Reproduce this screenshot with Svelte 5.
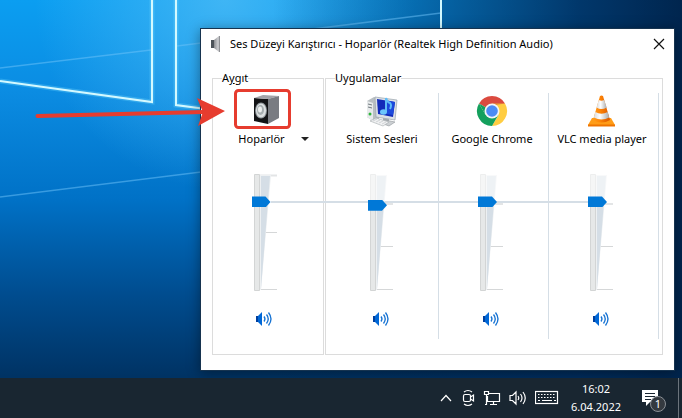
<script>
  let device = { name: "Hoparlör", volume: 76 };

  let apps = [
    { id: "system", name: "Sistem Sesleri", volume: 73 },
    { id: "chrome", name: "Google Chrome", volume: 76 },
    { id: "vlc", name: "VLC media player", volume: 76 },
  ];
</script>

{#snippet volumeIcon()}
  <svg width="19" height="16" viewBox="0 0 19 16" aria-hidden="true">
    <path d="M0 5h2v6H0z" fill="#003f9e" />
    <path d="M2 5l4-4v14l-4-4z" fill="#0067d6" />
    <path d="M8 5.500q2 2.500 0 5M10.500 3.500q3.500 4.500 0 9M12.500 1.500q5 6.500 0 13" fill="none" stroke="#1572d3" stroke-width="1.300" />
  </svg>
{/snippet}

{#snippet scale(isDevice)}
  <svg class="scale" width="28" height="119" viewBox="0 0 28 119" aria-hidden="true">
    {#if isDevice}
      <path d="M8 2.500h17" stroke="#e3e5e6" stroke-width="2" />
      <path d="M8 59.500h17M8 116.500h17" stroke="#d5d7d8" />
    {:else}
      <path d="M8 31h17" stroke="#e3e5e6" stroke-width="2" />
      <path d="M8 73.500h17M8 116.500h17" stroke="#d5d7d8" />
    {/if}
    <path d="M7 2h12l-10 115h-2z" fill="#edf0f2" />
    <path d="M9 3h9l-9 113z" fill="#d5dee6" />
    <path d="M2.500 1.500h5v116h-5z" fill="#e6e8e8" stroke="#d3d5d5" />
    {#if !isDevice}
      <path d="M0 0h20v28H0z" fill="#fff" opacity="0.6" />
    {/if}
  </svg>
{/snippet}

<main class="desktop">
  <svg class="wallpaper" viewBox="0 0 682 418" preserveAspectRatio="xMinYMin slice" aria-hidden="true">
    <defs>
      <linearGradient id="sky" x1="0" y1="0" x2="0" y2="1">
        <stop offset="0" stop-color="#0b9ef1" />
        <stop offset="0.22" stop-color="#0b8ce2" />
        <stop offset="0.48" stop-color="#0071c6" />
        <stop offset="0.7" stop-color="#004d90" />
        <stop offset="0.9" stop-color="#003364" />
      </linearGradient>
      <radialGradient id="glow" gradientUnits="userSpaceOnUse" cx="225" cy="0" r="190">
        <stop offset="0" stop-color="#50bdf6" stop-opacity="0.75" />
        <stop offset="1" stop-color="#50bdf6" stop-opacity="0" />
      </radialGradient>
      <linearGradient id="shade" x1="0" y1="0" x2="1" y2="0">
        <stop offset="0.4" stop-color="#002c5c" stop-opacity="0" />
        <stop offset="0.64" stop-color="#002c5c" stop-opacity="0.5" />
        <stop offset="0.85" stop-color="#002c5c" stop-opacity="0.9" />
        <stop offset="1" stop-color="#00254e" />
      </linearGradient>
    </defs>
    <rect width="682" height="418" fill="url(#sky)" />
    <rect width="682" height="418" fill="url(#glow)" />
    <rect width="682" height="418" fill="url(#shade)" />
    <path d="M0 68l151-18M177 46l264-33M0 197l201-25" stroke="#6fc4fa" stroke-opacity="0.5" stroke-width="1.500" />
    <g fill="none" stroke="#6fd6ff" stroke-opacity="0.3" stroke-width="5">
      <path d="M152 0v102L0 81" />
      <path d="M176 0v105l30 4" />
    </g>
    <g fill="none" stroke="#d3f9ff" stroke-width="2">
      <path d="M152 0v102L0 81" />
      <path d="M176 0v105l30 4" />
      <path d="M441 0v40" />
    </g>
  </svg>

  <section class="window" aria-label="Ses Düzeyi Karıştırıcı">
    <header class="titlebar">
      <svg width="12" height="18" viewBox="0 0 12 18" aria-hidden="true">
        <defs>
          <linearGradient id="cone" x1="0" y1="0" x2="1" y2="0">
            <stop offset="0" stop-color="#8a8c90" />
            <stop offset="0.7" stop-color="#d0d1d4" />
            <stop offset="1" stop-color="#77797d" />
          </linearGradient>
        </defs>
        <path d="M0 5h3v8H0z" fill="#4d5359" />
        <path d="M3 5l5-4h1v16H8l-5-4z" fill="url(#cone)" />
      </svg>
      <h1>Ses Düzeyi Karıştırıcı - Hoparlör (Realtek High Definition Audio)</h1>
      <button class="close" aria-label="Kapat">
        <svg width="12" height="12" viewBox="0 0 12 12"><path d="M1 1l10 10M11 1L1 11" stroke="#111" stroke-width="1.200" /></svg>
      </button>
    </header>

    <div class="mixer">
      <fieldset class="group device">
        <legend>A<u>y</u>gıt</legend>
        <div class="column">
          <button class="picture" aria-label="Hoparlör özellikleri">
            <svg width="30" height="34" viewBox="0 0 30 34">
              <path d="M3 4l14 1v25L3 27z" fill="#131416" />
              <path d="M3 4l9-3 16 1-11 3z" fill="#a2a4a9" />
              <path d="M17 5l11-3v22l-11 6z" fill="#797c82" />
              <ellipse cx="10" cy="16.500" rx="6" ry="8" fill="#8e9599" />
              <ellipse cx="10" cy="16.500" rx="5" ry="7" fill="#dce0e1" />
              <ellipse cx="9.500" cy="16" rx="3.500" ry="5" fill="#a7afb1" />
              <ellipse cx="9" cy="15.500" rx="2" ry="3" fill="#edf0ef" />
            </svg>
          </button>
          <button class="name picker">{device.name}<span class="caret"></span></button>
          <div class="slider">
            {@render scale(true)}
            <input type="range" min="0" max="100" aria-label={device.name} bind:value={device.volume} />
          </div>
          <button class="mute" aria-label="{device.name} sesini kapat">{@render volumeIcon()}</button>
        </div>
      </fieldset>

      <fieldset class="group apps">
        <legend>Uygulamalar</legend>
        {#each apps as app (app.id)}
          <div class="column">
            <button class="picture" aria-label={app.name}>
              {#if app.id === "system"}
                <svg width="32" height="34" viewBox="0 0 32 34">
                  <path d="M1 7l7-4 5 2v20l-6 2-6-4z" fill="#b9bfc2" />
                  <path d="M1 7l6 2v18l-6-4z" fill="#e7eaeb" />
                  <path d="M2 10l4 1M2 13l4 1" stroke="#727a80" />
                  <circle cx="4" cy="20" r="1.500" fill="#2fb53c" />
                  <path d="M9 3l22 3-2 20-19-3z" fill="#dce1e6" stroke="#9aa3ac" stroke-width="0.700" />
                  <path d="M11 5l18 3-2 15-15-3z" fill="#122bb9" />
                  <path d="M19 6l10 2-2 13-6-1z" fill="#1c49dc" />
                  <path d="M17 24l6 1v3h-6z" fill="#a7adb2" />
                  <path d="M12 28l7-2 10 2-6 4z" fill="#ccd0d3" stroke="#90969b" stroke-width="0.600" />
                  <path d="M4 27l6-3 13 4-6 4z" fill="#f1f2f3" stroke="#a3a9ad" stroke-width="0.600" />
                  <path d="M7 27l4-2M10 28l4-2M13 29l4-2M16 30l4-2" stroke="#b9bec1" stroke-width="0.600" />
                  <path d="M20 18V4q1 4 4 5 2 2 0 6" fill="none" stroke="#5fbcf8" stroke-width="2" />
                  <ellipse cx="17.500" cy="18" rx="3.500" ry="2.800" fill="#6cc6fb" />
                </svg>
              {:else if app.id === "chrome"}
                <svg width="32" height="34" viewBox="0 0 32 34">
                  <path d="M16 17L3 9.500A15 15 0 0 1 29 9.500z" fill="#db4a3f" />
                  <path d="M16 9.500H29A15 15 0 0 1 16 32l6.500-11z" fill="#ffcd42" />
                  <path d="M3 9.500A15 15 0 0 0 16 32l6.500-11.250L9.500 20.750z" fill="#14a05d" />
                  <path d="M3 9.500l6.500 11.250L16 17z" fill="#14a05d" />
                  <path d="M16 9.500h13l-10 1.500z" fill="#c43b31" opacity="0.5" />
                  <circle cx="16" cy="17" r="7.500" fill="#f4f5f5" />
                  <circle cx="16" cy="17" r="5.800" fill="#4b8bf5" />
                </svg>
              {:else}
                <svg width="32" height="34" viewBox="0 0 32 34">
                  <defs>
                    <linearGradient id="orange" x1="0" y1="0" x2="1" y2="0">
                      <stop offset="0" stop-color="#ff9d1c" />
                      <stop offset="0.4" stop-color="#ff8607" />
                      <stop offset="1" stop-color="#d95600" />
                    </linearGradient>
                    <linearGradient id="white" x1="0" y1="0" x2="1" y2="0">
                      <stop offset="0" stop-color="#d9dadb" />
                      <stop offset="0.4" stop-color="#fff" />
                      <stop offset="1" stop-color="#a9abad" />
                    </linearGradient>
                  </defs>
                  <path d="M6 24h19l4 7H2z" fill="#ff9c17" />
                  <path d="M2 30.500h27v2H2z" fill="#ef7400" />
                  <path d="M14 2q1.500-1 3 0l7 24q-8.500 5-17 0z" fill="url(#orange)" />
                  <path d="M12.800 6q2.700 1.500 5.400 0l2.500 7.500q-5.200 3-10.200 0z" fill="url(#white)" />
                  <path d="M9.300 18q6.200 3.500 12.400 0l1.500 5.500q-7.700 4-15.400 0z" fill="url(#white)" />
                </svg>
              {/if}
            </button>
            <div class="name">{app.name}</div>
            <div class="slider">
              {@render scale(false)}
              <input type="range" min="0" max="100" aria-label={app.name} bind:value={app.volume} />
            </div>
            <button class="mute" aria-label="{app.name} sesini kapat">{@render volumeIcon()}</button>
          </div>
        {/each}
      </fieldset>
      <div class="level"></div>
    </div>
  </section>

  <svg class="callout" width="300" height="140" viewBox="0 0 300 140" aria-hidden="true">
    <path d="M37.500 116L204 112" stroke="#e63c2f" stroke-width="4" stroke-linecap="round" />
    <path d="M197 98l28 13-27 15 5-14z" fill="#e63c2f" />
    <rect x="235.500" y="90.500" width="54" height="37" rx="3" fill="none" stroke="#e63c2f" stroke-width="3" />
  </svg>

  <footer class="taskbar">
    <button aria-label="Gizli simgeleri göster">
      <svg width="14" height="16" viewBox="0 0 14 16"><path d="M2 11l5-5.500L12 11" /></svg>
    </button>
    <button aria-label="Şimdi Toplan">
      <svg width="14" height="18" viewBox="0 0 14 18">
        <rect x="2.500" y="5.500" width="7" height="7" rx="1.500" />
        <path d="M9.500 8l3-2v6l-3-2M3 3q4-3 8 0M3 15q4 3 8 0" />
      </svg>
    </button>
    <button aria-label="Ağ">
      <svg width="18" height="16" viewBox="0 0 18 16">
        <path d="M6 3.500h10.500v8H4.500V6M10.500 11.500v3M7 14.500h7M1.500 1.500h4v3h-4zM3.500 5v9.500H2" />
      </svg>
    </button>
    <button aria-label="Ses">
      <svg width="18" height="16" viewBox="0 0 18 16">
        <path d="M1 5.500h2.500l3.500-3.500v12l-3.500-3.500H1zM9 6q1.500 2 0 4M11.500 4q3 4 0 8M14 2q4.500 6 0 12" />
      </svg>
    </button>
    <button aria-label="Dokunmatik klavye">
      <svg width="24" height="16" viewBox="0 0 24 16">
        <rect x="0.500" y="1.500" width="22" height="12" />
        <path d="M3 4.500h17M3 7.500h17" stroke-dasharray="1.500 1.500" />
        <path d="M3 10.500h2M7 10.500h10M19 10.500h2" />
      </svg>
    </button>
    <time class="clock"><span>16:02</span><span>6.04.2022</span></time>
    <button class="notifications" aria-label="Bildirimler">
      <svg width="17" height="18" viewBox="0 0 17 18">
        <path d="M0 1h16v12H8l-4 4v-4H0z" fill="#fff" stroke="none" />
        <path d="M3 4.500h10M3 7.500h10M3 10.500h6" class="lines" />
      </svg>
      <span class="badge">1</span>
    </button>
    <button class="show-desktop" aria-label="Masaüstünü göster"></button>
  </footer>
</main>

<style>
  :global(body) {
    margin: 0;
  }

  .desktop {
    position: relative;
    display: flex;
    flex-direction: column;
    justify-content: flex-end;
    min-height: 100vh;
    overflow: hidden;
    font-family: "Noto Sans", "Open Sans", sans-serif;
    font-size: 11px;
    color: #000;
  }

  .wallpaper {
    position: absolute;
    inset: 0;
    width: 100%;
    height: 100%;
  }

  button {
    padding: 0;
    border: 0;
    background: none;
    font: inherit;
    color: inherit;
  }

  svg {
    display: block;
  }

  .window {
    position: absolute;
    top: 28px;
    left: 200px;
    right: 7px;
    box-sizing: border-box;
    border: 1px solid #16334f;
    background: #fff;
    box-shadow: 0 2px 12px rgba(0, 0, 0, 0.4);
  }

  .titlebar {
    display: flex;
    align-items: center;
    height: 29px;
    padding: 0 9px 0 10px;
  }

  h1 {
    flex: 1;
    margin: 0 0 0 7px;
    font-size: 11px;
    font-weight: 400;
    white-space: nowrap;
  }

  .mixer {
    position: relative;
    display: flex;
    gap: 1px;
    padding: 12px 11px 15px;
  }

  .group {
    display: flex;
    box-sizing: border-box;
    min-width: 0;
    margin: 0;
    padding: 0;
    border: 1px solid #dcdcdc;
  }

  .device {
    width: 112px;
  }

  .apps {
    flex: 1;
    padding-left: 3px;
  }

  legend {
    margin-left: 9px;
    padding: 0;
    line-height: 16px;
  }

  .apps legend {
    margin-left: 6px;
  }

  .column {
    flex: 1;
    display: flex;
    flex-direction: column;
    align-items: center;
    box-sizing: border-box;
    margin: 7px 0 15px;
    padding: 0 3px 12px 0;
  }

  .device .column {
    padding-right: 5px;
  }

  .apps .column {
    max-width: 110px;
    border-right: 1px solid #d5dee6;
  }

  .picture {
    margin-top: 1px;
  }

  .name {
    margin-top: 2px;
    line-height: 18px;
    white-space: nowrap;
  }

  .picker {
    display: flex;
    align-items: center;
    gap: 16px;
    margin-left: 16px;
  }

  .caret {
    border: 4px solid transparent;
    border-top-color: #222;
    border-bottom: 0;
  }

  .slider {
    display: grid;
    z-index: 1;
    margin-top: 21px;
  }

  .slider > * {
    grid-area: 1 / 1;
  }

  .scale {
    margin-top: 4px;
  }

  input {
    writing-mode: vertical-lr;
    direction: rtl;
    appearance: none;
    width: 19px;
    height: 125px;
    margin: 0;
    background: none;
  }

  input::-webkit-slider-thumb {
    appearance: none;
    width: 19px;
    height: 11px;
    background: #0078d7;
    clip-path: polygon(0 0, 14px 0, 100% 50%, 14px 100%, 0 100%);
  }

  .mute {
    margin-top: 17px;
  }

  .level {
    position: absolute;
    top: 143px;
    left: 70px;
    right: 82px;
    height: 2px;
    background: #d5dee6;
  }

  .callout {
    position: absolute;
    top: 0;
    left: 0;
    pointer-events: none;
  }

  .taskbar {
    position: relative;
    display: flex;
    align-items: center;
    justify-content: flex-end;
    gap: 8px;
    height: 40px;
    background: #192631;
    color: #fff;
  }

  .taskbar svg {
    fill: none;
    stroke: #fff;
    stroke-width: 1.2px;
  }

  .clock {
    display: flex;
    flex-direction: column;
    align-items: center;
    margin: 0 13px 0 4px;
    line-height: 18px;
  }

  .notifications {
    position: relative;
    margin-right: 11px;
  }

  .taskbar .lines {
    stroke: #192631;
  }

  .badge {
    position: absolute;
    top: 7px;
    left: 8px;
    width: 14px;
    border: 1px solid #8a9096;
    border-radius: 50%;
    background: #343a40;
    line-height: 14px;
  }

  .show-desktop {
    align-self: stretch;
    width: 4px;
    border-left: 1px solid #6b747c;
  }
</style>
